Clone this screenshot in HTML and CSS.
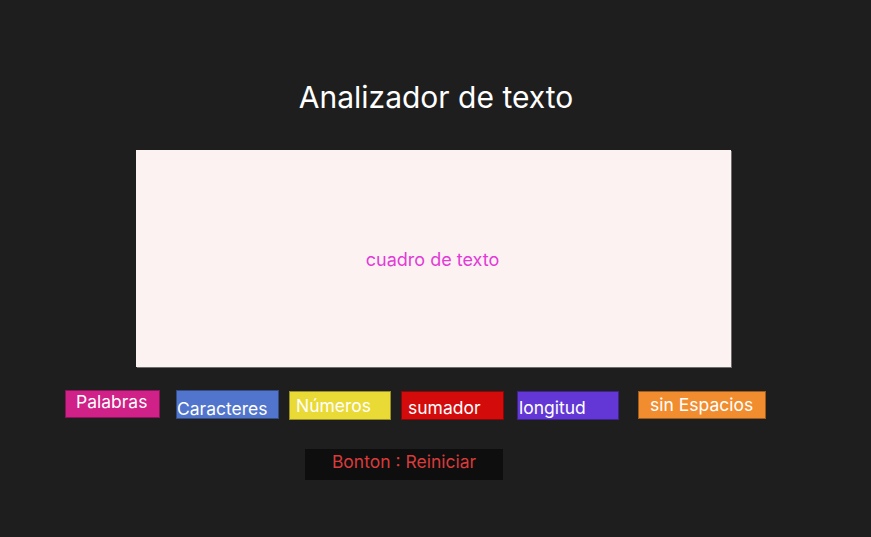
FILE: index.html
```html
<!DOCTYPE html>
<html lang="es">
<head>
<meta charset="utf-8">
<title>Analizador de texto</title>
<link rel="stylesheet" href="styles.css">
</head>
<body>
<main class="page">
  <h1 class="title">Analizador de texto</h1>
  <div class="textbox"><span class="placeholder">cuadro de texto</span></div>
  <div class="stats">
    <div class="stat palabras">Palabras</div>
    <div class="stat caracteres">Caracteres</div>
    <div class="stat numeros">Números</div>
    <div class="stat sumador">sumador</div>
    <div class="stat longitud">longitud</div>
    <div class="stat espacios">sin Espacios</div>
  </div>
  <div class="reset">Bonton : Reiniciar</div>
</main>
</body>
</html>
```
FILE: styles.css
```css
html, body {
  margin: 0;
  padding: 0;
  background: #1e1e1e;
}
body {
  font-family: Inter, "Noto Sans", "Liberation Sans", sans-serif;
  width: 871px;
  height: 537px;
  overflow: hidden;
}
.page {
  display: flex;
  flex-direction: column;
  padding-top: 79px;
}
.title {
  margin: 0;
  font-size: 30px;
  font-weight: 400;
  line-height: 36px;
  color: #ffffff;
  text-align: center;
  padding-left: 1px;
}
.textbox {
  margin: 35px 0 0 136px;
  width: 595px;
  height: 217px;
  background: #fcf2f2;
  box-shadow: 1px 1px 0 #6e6e6e;
  display: flex;
  align-items: center;
  justify-content: center;
}
.placeholder {
  font-size: 18px;
  line-height: 22px;
  color: #e23bd6;
  margin: 2px 0 0 -2px;
}
.stats {
  display: flex;
  align-items: flex-start;
  margin-top: 23px;
  padding-left: 65px;
}
.stat {
  box-sizing: border-box;
  border: 1px solid rgba(0, 0, 0, 0.35);
  color: #ffffff;
  font-size: 17.5px;
  line-height: 21px;
  white-space: nowrap;
  overflow: hidden;
}
.palabras {
  width: 95px;
  height: 28px;
  background: #cf2188;
  padding: 0 0 0 10px;
}
.caracteres {
  margin-left: 16px;
  width: 103px;
  height: 29px;
  background: #5174cc;
  padding: 7px 0 0 0;
}
.numeros {
  margin: 1px 0 0 10px;
  width: 102px;
  height: 29px;
  background: #eada36;
  padding: 3px 0 0 6px;
}
.sumador {
  margin: 1px 0 0 10px;
  width: 103px;
  height: 29px;
  background: #d40b0b;
  padding: 5px 0 0 6px;
}
.longitud {
  margin: 1px 0 0 13px;
  width: 102px;
  height: 29px;
  background: #6237d6;
  padding: 5px 0 0 1px;
}
.espacios {
  margin: 1px 0 0 19px;
  width: 128px;
  height: 28px;
  background: #f28d2f;
  padding: 2px 0 0 11px;
}
.reset {
  margin: 29px 0 0 305px;
  box-sizing: border-box;
  width: 198px;
  height: 31px;
  background: #0e0e0e;
  color: #d93b3b;
  font-size: 17.5px;
  line-height: 21px;
  padding-top: 2px;
  text-align: center;
}
```
